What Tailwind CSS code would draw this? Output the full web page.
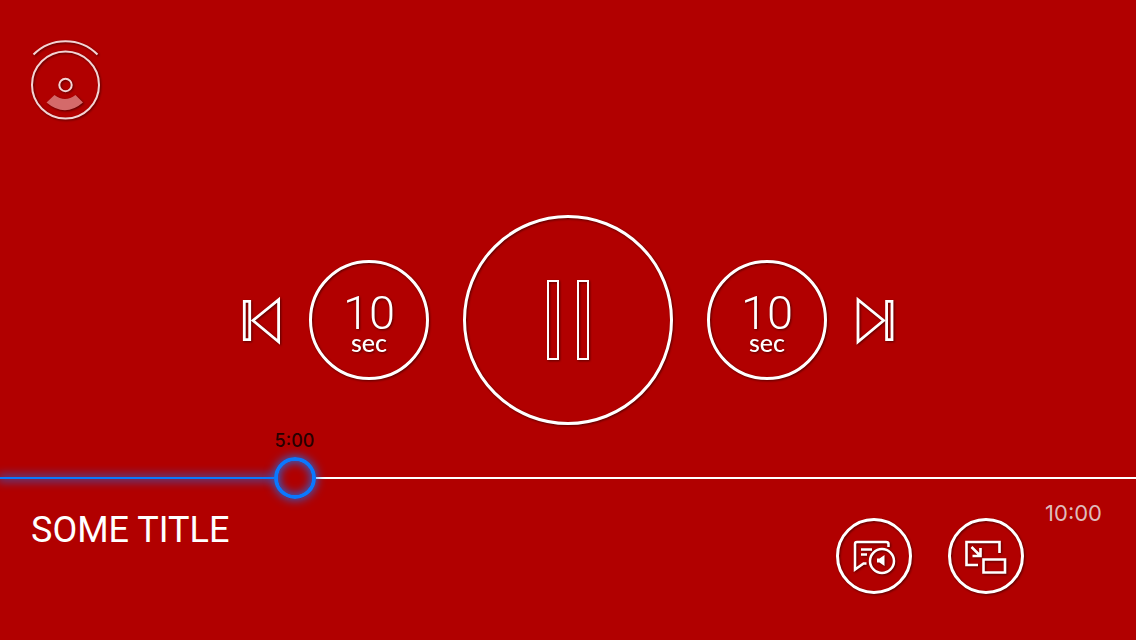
<!DOCTYPE html>
<html lang="en">
<head>
<meta charset="utf-8">
<meta name="viewport" content="width=device-width, initial-scale=1">
<title>Player</title>
<script src="https://cdn.jsdelivr.net/npm/@tailwindcss/browser@4"></script>
</head>
<body class="flex min-h-screen flex-col overflow-x-hidden bg-[#b10000] font-['Inter',sans-serif] text-white">
  <header class="flex px-7 pt-9">
    <button type="button" aria-label="Camera angle">
      <svg class="block h-[86px] w-[76px] drop-shadow-[1px_1px_1px_rgba(0,0,0,0.5)]" viewBox="28 36 76 86" fill="none" stroke="#f3d4d4" stroke-width="2">
        <path d="M33.500 54.500C51 36.700 80 36.700 97.500 54.500"/>
        <circle cx="65.500" cy="85" r="33.500"/>
        <circle cx="65.500" cy="85" r="6.200"/>
        <path d="M54.500 95Q65 103 75.500 95L83 102.500Q65 118 46.500 102.500Z" fill="#d46a6a" stroke="none"/>
      </svg>
    </button>
  </header>

  <main class="flex flex-1 items-center justify-center pt-[88px]">
    <button type="button" aria-label="Previous" class="mr-7">
      <svg class="block h-[50px] w-10 drop-shadow-[1px_1px_1px_rgba(0,0,0,0.5)]" viewBox="0 0 40 50" fill="none" stroke="#fff" stroke-width="2.800">
        <path d="M3.300 6.300h5.400v38.400H3.300z"/>
        <path d="M37.600 4.600v42.200L12 25.500z"/>
      </svg>
    </button>
    <button type="button" class="mr-[34px] flex size-[120px] flex-col items-center justify-center rounded-full border-3 border-white pt-2 font-['Lato',sans-serif] drop-shadow-[1px_1px_1px_rgba(0,0,0,0.5)]">
      <span class="font-['Roboto',sans-serif] text-[47px] leading-[36px] font-light">10</span>
      <span class="text-[25px] leading-[22px] font-medium">sec</span>
    </button>
    <button type="button" aria-label="Pause" class="flex size-[210px] items-center justify-center rounded-full border-3 border-white drop-shadow-[1px_1px_1px_rgba(0,0,0,0.5)]">
      <svg class="block h-20 w-[42px]" viewBox="0 0 42 80" fill="none" stroke="#fff" stroke-width="2">
        <path d="M1 1h10v78H1zM31 1h10v78H31z"/>
      </svg>
    </button>
    <button type="button" class="ml-[34px] flex size-[120px] flex-col items-center justify-center rounded-full border-3 border-white pt-2 font-['Lato',sans-serif] drop-shadow-[1px_1px_1px_rgba(0,0,0,0.5)]">
      <span class="font-['Roboto',sans-serif] text-[47px] leading-[36px] font-light">10</span>
      <span class="text-[25px] leading-[22px] font-medium">sec</span>
    </button>
    <button type="button" aria-label="Next" class="ml-7">
      <svg class="block h-[50px] w-10 drop-shadow-[1px_1px_1px_rgba(0,0,0,0.5)]" viewBox="0 0 40 50" fill="none" stroke="#fff" stroke-width="2.800">
        <path d="M31.600 6.300h5.400v38.400h-5.400z"/>
        <path d="M3 4.600v42.200L28.600 25.500z"/>
      </svg>
    </button>
  </main>

  <section aria-label="Progress">
    <div class="grid grid-cols-[1fr_42px_3fr]">
      <label for="seek" class="col-start-2 flex justify-center text-lg leading-6 font-medium text-[#250000]">5:00</label>
    </div>
    <div class="relative mt-1 grid h-[42px] grid-cols-[1fr_42px_3fr] items-center">
      <div class="h-0.5 bg-[#0a78ff] shadow-[0_0_10px_2px_rgba(10,120,255,0.7)]"></div>
      <div></div>
      <div class="h-0.5 bg-white"></div>
      <input id="seek" type="range" min="0" max="100" value="25" class="absolute inset-0 h-[42px] w-full appearance-none bg-transparent [&::-webkit-slider-thumb]:size-[42px] [&::-webkit-slider-thumb]:appearance-none [&::-webkit-slider-thumb]:rounded-full [&::-webkit-slider-thumb]:border-4 [&::-webkit-slider-thumb]:border-[#0a78ff] [&::-webkit-slider-thumb]:bg-transparent [&::-webkit-slider-thumb]:shadow-[0_0_10px_1px_rgba(10,120,255,0.8),inset_0_0_10px_1px_rgba(10,120,255,0.8)]">
    </div>
  </section>

  <footer class="flex h-[141px] items-start pr-[34px] pl-[31px]">
    <h1 class="mt-[9px] flex-1 font-['Roboto',sans-serif] text-4xl leading-[44px] font-normal">SOME TITLE</h1>
    <button type="button" aria-label="Subtitles and audio" class="mt-[19px] mr-9 flex size-[76px] items-center justify-center rounded-full border-3 border-white drop-shadow-[1px_1px_1px_rgba(0,0,0,0.5)]">
      <svg class="block size-[70px]" viewBox="839 521 70 70" fill="none" stroke="#fff" stroke-width="2.500">
        <path d="M888.500 547V544Q888.500 542 886 542H857Q855 542 855 544V569.500L863.500 563.500H866.500M861 549.500h11M861 554.500h6"/>
        <circle cx="882" cy="561" r="12"/>
        <path d="M877 558.500h2.500l5-3.500v11l-5-3.500H877z" fill="#fff" stroke="none"/>
      </svg>
    </button>
    <button type="button" aria-label="Picture in picture" class="mt-[19px] mr-[21px] flex size-[76px] items-center justify-center rounded-full border-3 border-white drop-shadow-[1px_1px_1px_rgba(0,0,0,0.5)]">
      <svg class="block size-[70px]" viewBox="951 521 70 70" fill="none" stroke="#fff" stroke-width="2.600">
        <path d="M978 565H966.500V542H999.500V553M971.500 547l8.500 8.500M980.500 548v8h-8M983.500 559.500h21.500v13h-21.500z"/>
      </svg>
    </button>
    <span class="text-[22px] leading-7 text-[#dfbcbc]">10:00</span>
  </footer>
</body>
</html>
